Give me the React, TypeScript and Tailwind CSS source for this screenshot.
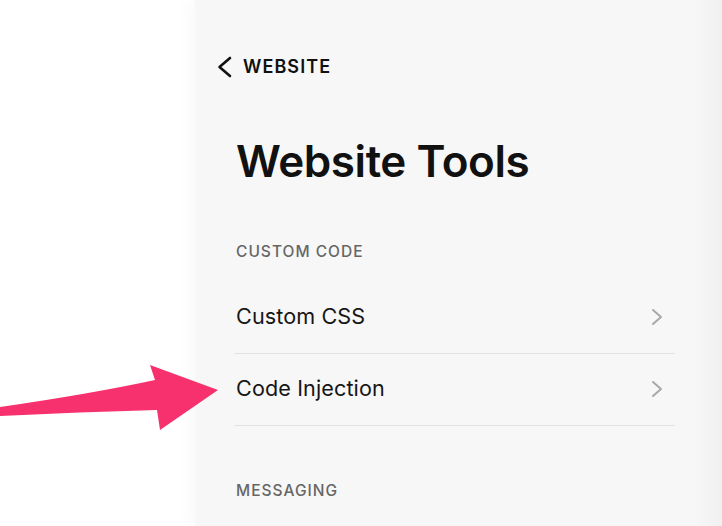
import React from "react";

const font = { fontFamily: "Inter, 'Liberation Sans', Arial, sans-serif" };

function ChevronRight() {
  return (
    <svg width="12" height="18" viewBox="0 0 12 18" fill="none" className="shrink-0">
      <path d="M2 2 L10 9 L2 16" stroke="#a8a8a8" strokeWidth="2" strokeLinecap="round" strokeLinejoin="round" />
    </svg>
  );
}

function ChevronLeft() {
  return (
    <svg width="16" height="22" viewBox="0 0 16 22" fill="none" className="shrink-0">
      <path d="M13 2 L2.5 11 L13 20" stroke="#111" strokeWidth="2.6" strokeLinecap="round" strokeLinejoin="round" />
    </svg>
  );
}

function ToolRow({ label }: { label: string }) {
  return (
    <div className="flex h-[72px] items-center justify-between border-b border-[#e3e3e3] pl-[2px] pr-[12px]">
      <span className="text-[21.6px] leading-none tracking-[0.005em] text-[#161616]">{label}</span>
      <ChevronRight />
    </div>
  );
}

function SectionLabel({ children }: { children: React.ReactNode }) {
  return (
    <div className="pl-[2px] text-[15.5px] font-medium uppercase leading-none tracking-[0.065em] text-[#666]">
      {children}
    </div>
  );
}

export default function App() {
  return (
    <div className="relative flex h-[526px] w-[722px] overflow-hidden bg-white" style={font}>
      <div className="w-[195px] shrink-0 bg-white" />

      <div className="relative flex-1 bg-[#f7f7f7] shadow-[-8px_0_14px_rgba(0,0,0,0.025)]">
        <div className="absolute inset-y-0 right-0 w-[26px] bg-gradient-to-r from-[#f7f7f7] to-[#f0f0f0]" />
        <div className="relative pl-[39px] pr-[47px] pt-[55px]">
          <div className="-ml-[17px] flex h-6 items-center gap-[10px]">
            <ChevronLeft />
            <span className="text-[18px] font-semibold leading-none tracking-[0.06em] text-[#111]">WEBSITE</span>
          </div>

          <h1 className="mt-[60px] pl-[2px] text-[44px] font-semibold leading-none tracking-[-0.01em] text-[#111]">
            Website Tools
          </h1>

          <div className="mt-[61px]">
            <SectionLabel>Custom Code</SectionLabel>
          </div>

          <div className="mt-[22px]">
            <ToolRow label="Custom CSS" />
            <ToolRow label="Code Injection" />
          </div>

          <div className="mt-[57px]">
            <SectionLabel>Messaging</SectionLabel>
          </div>
        </div>
      </div>

      {/* annotation arrow */}
      <svg className="absolute left-0 top-0" width="722" height="526" viewBox="0 0 722 526" fill="none">
        <path
          d="M0 407 Q90 394 155 380 L150 365 L218 390 L160 430 L157 410 Q80 412 0 416 Z"
          fill="#f7316d"
        />
      </svg>
    </div>
  );
}
